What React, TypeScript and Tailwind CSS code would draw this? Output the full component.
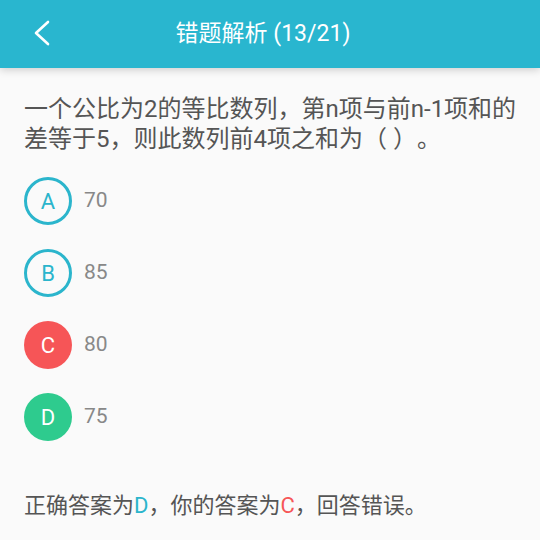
const font = { fontFamily: 'Roboto, "Noto Sans CJK SC", sans-serif' }

const options = [
  { key: 'A', text: '70', kind: 'normal' },
  { key: 'B', text: '85', kind: 'normal' },
  { key: 'C', text: '80', kind: 'wrong' },
  { key: 'D', text: '75', kind: 'right' },
]

function Badge({ letter, kind }: { letter: string; kind: string }) {
  if (kind === 'wrong') {
    return (
      <div className="flex h-12 w-12 items-center justify-center rounded-full bg-[#f65557] text-[22px] text-white">
        {letter}
      </div>
    )
  }
  if (kind === 'right') {
    return (
      <div className="flex h-12 w-12 items-center justify-center rounded-full bg-[#2ecb8e] text-[22px] text-white">
        {letter}
      </div>
    )
  }
  return (
    <div className="flex h-12 w-12 items-center justify-center rounded-full border-[3px] border-[#2bb5cc] text-[22px] text-[#2bb5cc]">
      {letter}
    </div>
  )
}

export default function App() {
  return (
    <div className="h-[540px] w-[540px] overflow-hidden bg-[#fafafa] [text-spacing-trim:space-all]" style={font}>
      <header className="relative flex h-[68px] items-center justify-center bg-[#29b6cf] shadow-[0_2px_8px_rgba(0,0,0,0.18)]">
        <svg className="absolute left-[32px] top-[20px]" width="20" height="26" viewBox="0 0 20 26">
          <path d="M16 2 L4 13 L16 24" fill="none" stroke="white" strokeWidth="2.6" strokeLinecap="round" strokeLinejoin="round" />
        </svg>
        <h1 className="mr-[14px] text-[23px] text-white">错题解析 (13/21)</h1>
      </header>

      <main className="pl-6 pr-3">
        <p className="mt-[26px] text-[24px] leading-[30px] text-[#555]">
          一个公比为2的等比数列，第n项与前n-1项和的差等于5，则此数列前4项之和为（ ）。
        </p>

        <ul className="mt-[23px] flex flex-col gap-6">
          {options.map((o) => (
            <li key={o.key} className="flex items-center gap-3">
              <Badge letter={o.key} kind={o.kind} />
              <span className="text-[21px] text-[#888]">{o.text}</span>
            </li>
          ))}
        </ul>

        <p className="mt-[48px] text-[22px] text-[#555]">
          正确答案为<span className="text-[#2bb5cc]">D</span>，你的答案为
          <span className="text-[#f65557]">C</span>，回答错误。
        </p>
      </main>
    </div>
  )
}
